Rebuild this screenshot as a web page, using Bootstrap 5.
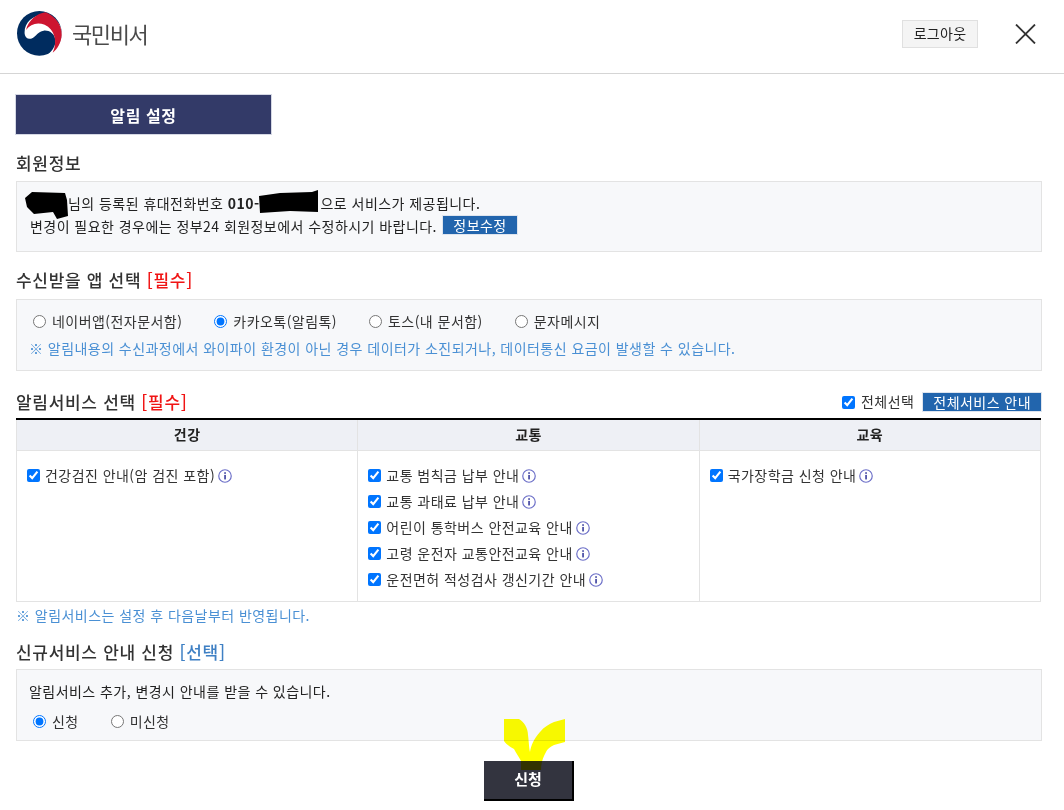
<!DOCTYPE html>
<html lang="ko">
<head>
<meta charset="utf-8">
<title>국민비서</title>
<link href="https://cdn.jsdelivr.net/npm/bootstrap@5.3.0/dist/css/bootstrap.min.css" rel="stylesheet">
<style>
html,body{height:810px;overflow:hidden}
body{font-family:"Noto Sans CJK KR","Liberation Sans",sans-serif;font-size:14px;letter-spacing:.45px;color:#333;background:#fff;position:relative;line-height:1.4}
.top-bar{height:74px;border-bottom:1px solid #d5d5d5;padding:0 28px 6px 17px}
.brand-name{font-size:22px;font-weight:400;color:#4a4a4a;letter-spacing:-1.4px;margin-left:10px}
.logout-btn{width:76px;height:28px;border:1px solid #e0e0e0;background:#f4f4f4;font-size:14px;letter-spacing:.3px;color:#222;padding:0;margin-right:37px;border-radius:0}
.page-body{padding:20px 22px 0 16px}
.title-tab{width:257px;height:41px;background:#333a68;border:1px solid #d5d8e4;color:#fff;font-size:16px;letter-spacing:.6px;font-weight:700;margin-left:-1px}
.sec-title{font-size:17px;letter-spacing:.7px;font-weight:500;color:#333;line-height:24px;margin:0}
.req{color:#f01414}
.opt{color:#3f80c4}
.info-box{background:#f7f8fa;border:1px solid #e3e3e3}
.box-a{height:71px;margin-top:6px;padding:10px 12px 0 13px;line-height:23px;color:#222}
.name-gap{display:inline-block;width:38px}
.phone-gap{display:inline-block;width:61px}
.mini-btn{display:inline-block;background:#2265ad;color:#fff;border:1px solid #dfe5ee;height:20px;line-height:18px;font-size:14px;padding:0 10px;margin-left:1px;vertical-align:1px}
.box-b{height:72px;margin-top:7px;padding:9px 12px 0 16px}
.choice{display:inline-flex;align-items:center;gap:6px;color:#333;margin:0}
.choice input{margin:0;flex:none}
.opt-row{gap:32px;line-height:24px}
.note{color:#4a90d4;font-size:14px;line-height:20px}
.box-b .note{margin-top:5px;margin-left:-4px}
.svc-head{margin-top:15px;height:32px}
.svc-table{width:1025px;border-top:2px solid #000;table-layout:fixed;margin:0}
.svc-table th{background:#eef0f5;font-weight:700;font-size:14px;color:#222;text-align:center;height:31px;padding:0;border:1px solid #e3e3e3;border-top:0}
.svc-table td{height:151px;padding:12px 10px 0;vertical-align:top;border:1px solid #e3e3e3}
.svc-item{display:flex;align-items:center;height:26px;gap:5px;color:#333;margin:0}
.svc-item input{width:13px;height:13px;margin:0;flex:none}
.tip-icon{width:14px;height:14px;flex:none;margin-left:-2px;margin-top:1px}
.after-table{margin-top:3px}
.sec-new{margin-top:15px}
.box-c{height:72px;margin-top:5px;padding:12px 12px 0 12px;color:#222}
.box-c .opt-row{gap:32px;margin-top:8px;padding-left:4px}
.submit-btn{width:90px;height:40px;background:#33343f;border:0;border-right:2px solid #000;border-bottom:2px solid #000;color:#fff;font-weight:700;font-size:15px;border-radius:0;padding:0}
.submit-wrap{margin-top:20px;margin-left:468px}
.blot{position:absolute;left:0;top:0}
.scribble{position:absolute;left:504px;top:719px;width:62px;height:52px;mix-blend-mode:multiply}
</style>
</head>
<body>
<header class="top-bar d-flex align-items-center justify-content-between">
  <div class="d-flex align-items-center">
    <svg width="45" height="45" viewBox="15 13 135 135" aria-hidden="true">
      <circle cx="82" cy="80" r="67" fill="#002c5f"/>
      <path d="M38 82C35 50 60 25 95 25C130 25 152 60 149 85C146 115 128 138 100 150C120 135 132 118 130 100C128 80 110 70 95 72C78 75 72 88 62 94C50 100 40 95 38 82Z" fill="#fff"/>
      <path d="M42 70C50 40 75 20 100 17C130 28 150 55 149 85C147 108 138 125 122 138C138 105 128 68 98 54C75 46 55 52 42 70Z" fill="#cd1530"/>
    </svg>
    <span class="brand-name">국민비서</span>
  </div>
  <div class="d-flex align-items-center">
    <button type="button" class="btn logout-btn">로그아웃</button>
    <svg width="21" height="20" viewBox="0 0 21 20" aria-hidden="true"><path d="M1 0.5L20 19.5M20 0.5L1 19.5" stroke="#333" stroke-width="1.8" fill="none"/></svg>
  </div>
</header>
<main class="page-body">
  <button type="button" class="btn rounded-0 title-tab d-block p-0">알림 설정</button>
  <h2 class="sec-title mt-3">회원정보</h2>
  <div class="info-box box-a">
    <div><span class="name-gap"></span>님의 등록된 휴대전화번호 <b>010-</b><span class="phone-gap"></span>으로 서비스가 제공됩니다.</div>
    <div>변경이 필요한 경우에는 정부24 회원정보에서 수정하시기 바랍니다. <span class="mini-btn">정보수정</span></div>
  </div>
  <h2 class="sec-title mt-3">수신받을 앱 선택 <span class="req">[필수]</span></h2>
  <div class="info-box box-b">
    <div class="d-flex opt-row">
      <label class="choice"><input type="radio" name="app">네이버앱(전자문서함)</label>
      <label class="choice"><input type="radio" name="app" checked>카카오톡(알림톡)</label>
      <label class="choice"><input type="radio" name="app">토스(내 문서함)</label>
      <label class="choice"><input type="radio" name="app">문자메시지</label>
    </div>
    <div class="note">※ 알림내용의 수신과정에서 와이파이 환경이 아닌 경우 데이터가 소진되거나, 데이터통신 요금이 발생할 수 있습니다.</div>
  </div>
  <div class="d-flex justify-content-between align-items-center svc-head">
    <h2 class="sec-title">알림서비스 선택 <span class="req">[필수]</span></h2>
    <div class="d-flex align-items-center gap-2">
      <label class="choice"><input type="checkbox" checked>전체선택</label>
      <span class="mini-btn m-0">전체서비스 안내</span>
    </div>
  </div>
  <table class="svc-table">
    <thead><tr><th>건강</th><th>교통</th><th>교육</th></tr></thead>
    <tbody><tr>
      <td>
        <label class="svc-item"><input type="checkbox" checked>건강검진 안내(암 검진 포함)<svg class="tip-icon" viewBox="0 0 13 13"><use href="#tip"/></svg></label>
      </td>
      <td>
        <label class="svc-item"><input type="checkbox" checked>교통 범칙금 납부 안내<svg class="tip-icon" viewBox="0 0 13 13"><use href="#tip"/></svg></label>
        <label class="svc-item"><input type="checkbox" checked>교통 과태료 납부 안내<svg class="tip-icon" viewBox="0 0 13 13"><use href="#tip"/></svg></label>
        <label class="svc-item"><input type="checkbox" checked>어린이 통학버스 안전교육 안내<svg class="tip-icon" viewBox="0 0 13 13"><use href="#tip"/></svg></label>
        <label class="svc-item"><input type="checkbox" checked>고령 운전자 교통안전교육 안내<svg class="tip-icon" viewBox="0 0 13 13"><use href="#tip"/></svg></label>
        <label class="svc-item"><input type="checkbox" checked>운전면허 적성검사 갱신기간 안내<svg class="tip-icon" viewBox="0 0 13 13"><use href="#tip"/></svg></label>
      </td>
      <td>
        <label class="svc-item"><input type="checkbox" checked>국가장학금 신청 안내<svg class="tip-icon" viewBox="0 0 13 13"><use href="#tip"/></svg></label>
      </td>
    </tr></tbody>
  </table>
  <div class="note after-table">※ 알림서비스는 설정 후 다음날부터 반영됩니다.</div>
  <h2 class="sec-title sec-new">신규서비스 안내 신청 <span class="opt">[선택]</span></h2>
  <div class="info-box box-c">
    <div>알림서비스 추가, 변경시 안내를 받을 수 있습니다.</div>
    <div class="d-flex opt-row">
      <label class="choice"><input type="radio" name="news" checked>신청</label>
      <label class="choice"><input type="radio" name="news">미신청</label>
    </div>
  </div>
  <div class="submit-wrap"><button type="button" class="btn submit-btn">신청</button></div>
</main>
<svg width="0" height="0" class="d-block" aria-hidden="true"><symbol id="tip" viewBox="0 0 13 13"><circle cx="6.5" cy="6.5" r="5.8" fill="none" stroke="#6c6fc8" stroke-width="1.1"/><rect x="5.8" y="5.5" width="1.5" height="4.2" fill="#3b3f9e"/><rect x="5.8" y="3" width="1.5" height="1.5" fill="#3b3f9e"/></symbol></svg>
<svg class="blot" width="330" height="225" viewBox="0 0 330 225" aria-hidden="true">
  <path d="M25 198L32 192L65 193L67 200L68 216L57 219L53 212L34 214L27 207Z" fill="#000"/>
  <path d="M259 196L280 193L312 192L318 190L318 212L290 211L260 213Z" fill="#000"/>
</svg>
<svg class="scribble" viewBox="0 0 62 52" aria-hidden="true"><path d="M0 0H15C20 3 24 9 24 16C25 24 25 29 26 33C27 26 30 20 36 13C40 8 45 5 50 3L61 0V23L50 26C46 28 43 30 42 33C38 40 37 46 37 51H17V42C15 38 12 34 10 30C6 28 2 25 0 22Z" fill="#ffff00"/></svg>
</body>
</html>
